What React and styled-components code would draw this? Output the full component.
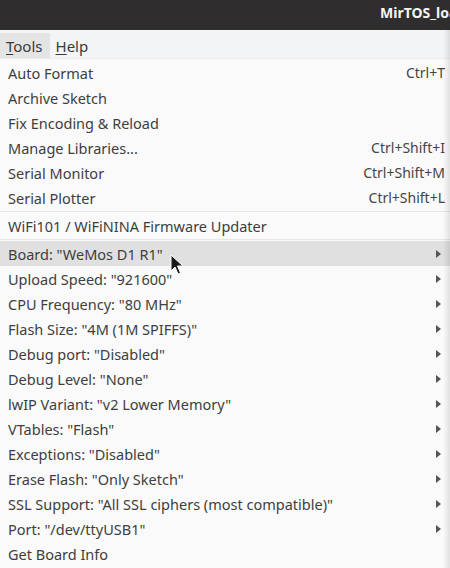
import React from "react";
import styled, { createGlobalStyle } from "styled-components";

const Global = createGlobalStyle`
  html, body {
    margin: 0;
    padding: 0;
    background: #fafafa;
  }
  body {
    font-family: "Noto Sans", "DejaVu Sans", sans-serif;
  }
`;

const Window = styled.div`
  position: relative;
  width: 450px;
  height: 568px;
  overflow: hidden;
  background: #fafafa;
`;

const TitleBar = styled.div`
  height: 30px;
  background: #2f2d2d;
  display: flex;
  align-items: center;
  padding-left: 380px;
  white-space: nowrap;
  overflow: hidden;
`;

const Title = styled.span`
  color: #f5f5f5;
  font-weight: bold;
  font-size: 14px;
  margin-top: -6px;
`;

const MenuBar = styled.div`
  height: 29px;
  background: #f3f4f5;
  display: flex;
  align-items: flex-end;
  border-bottom: 1px solid #ececec;
  box-sizing: border-box;
`;

const MenuTitle = styled.div`
  height: 25px;
  padding: 0 7px 0 6px;
  display: flex;
  align-items: center;
  font-size: 15px;
  color: #3a3a3a;
  background: ${p => (p.$open ? "#e4e4e4" : "transparent")};
  u {
    text-decoration-thickness: 1px;
    text-underline-offset: 2px;
  }
`;

const Menu = styled.div`
  display: flex;
  flex-direction: column;
  padding-top: 1px;
  background: #fafafa;
`;

const Item = styled.div`
  height: 25px;
  padding: 0 9px 0 8px;
  display: flex;
  align-items: center;
  justify-content: space-between;
  font-size: 14.5px;
  color: #3e3e3e;
  background: ${p => (p.$active ? "#e0e0e0" : "transparent")};
  white-space: nowrap;
`;

const Shortcut = styled.span`
  color: #444;
  font-size: 14px;
  margin-right: -4px;
`;

const Sep = styled.div`
  height: 1px;
  margin: 1px 0;
  background: #e6e6e6;
`;

const Arrow = styled.span`
  width: 0;
  height: 0;
  border-top: 4.5px solid transparent;
  border-bottom: 4.5px solid transparent;
  border-left: 5px solid #555;
`;

const EdgeShade = styled.div`
  position: absolute;
  top: 30px;
  right: 0;
  bottom: 0;
  width: 7px;
  background: linear-gradient(to right, rgba(0, 0, 0, 0), rgba(0, 0, 0, 0.1));
  pointer-events: none;
`;

const Cursor = styled.svg`
  position: absolute;
  left: 170px;
  top: 254px;
`;

const top = [
  ["Auto Format", "Ctrl+T"],
  ["Archive Sketch"],
  ["Fix Encoding & Reload"],
  ["Manage Libraries...", "Ctrl+Shift+I"],
  ["Serial Monitor", "Ctrl+Shift+M"],
  ["Serial Plotter", "Ctrl+Shift+L"],
];

const boards = [
  'Board: "WeMos D1 R1"',
  'Upload Speed: "921600"',
  'CPU Frequency: "80 MHz"',
  'Flash Size: "4M (1M SPIFFS)"',
  'Debug port: "Disabled"',
  'Debug Level: "None"',
  'lwIP Variant: "v2 Lower Memory"',
  'VTables: "Flash"',
  'Exceptions: "Disabled"',
  'Erase Flash: "Only Sketch"',
  'SSL Support: "All SSL ciphers (most compatible)"',
  'Port: "/dev/ttyUSB1"',
];

export default function App() {
  return (
    <Window>
      <Global />
      <TitleBar>
        <Title>MirTOS_loader | Arduino 1.8.13</Title>
      </TitleBar>
      <MenuBar>
        <MenuTitle $open>
          <span><u>T</u>ools</span>
        </MenuTitle>
        <MenuTitle>
          <span><u>H</u>elp</span>
        </MenuTitle>
      </MenuBar>
      <Menu>
        {top.map(([label, key]) => (
          <Item key={label}>
            <span>{label}</span>
            {key && <Shortcut>{key}</Shortcut>}
          </Item>
        ))}
        <Sep />
        <Item>
          <span>WiFi101 / WiFiNINA Firmware Updater</span>
        </Item>
        <Sep />
        {boards.map((label, i) => (
          <Item key={label} $active={i === 0}>
            <span>{label}</span>
            <Arrow />
          </Item>
        ))}
        <Item>
          <span>Get Board Info</span>
        </Item>
      </Menu>
      <EdgeShade />
      <Cursor width="14" height="22" viewBox="0 0 14 22">
        <path
          d="M1 1 L1 17 L5 13 L8 20 L10.5 19 L7.5 12 L13 12 Z"
          fill="#1a1a1a"
          stroke="#fff"
          strokeWidth="1"
          strokeLinejoin="round"
        />
      </Cursor>
    </Window>
  );
}
